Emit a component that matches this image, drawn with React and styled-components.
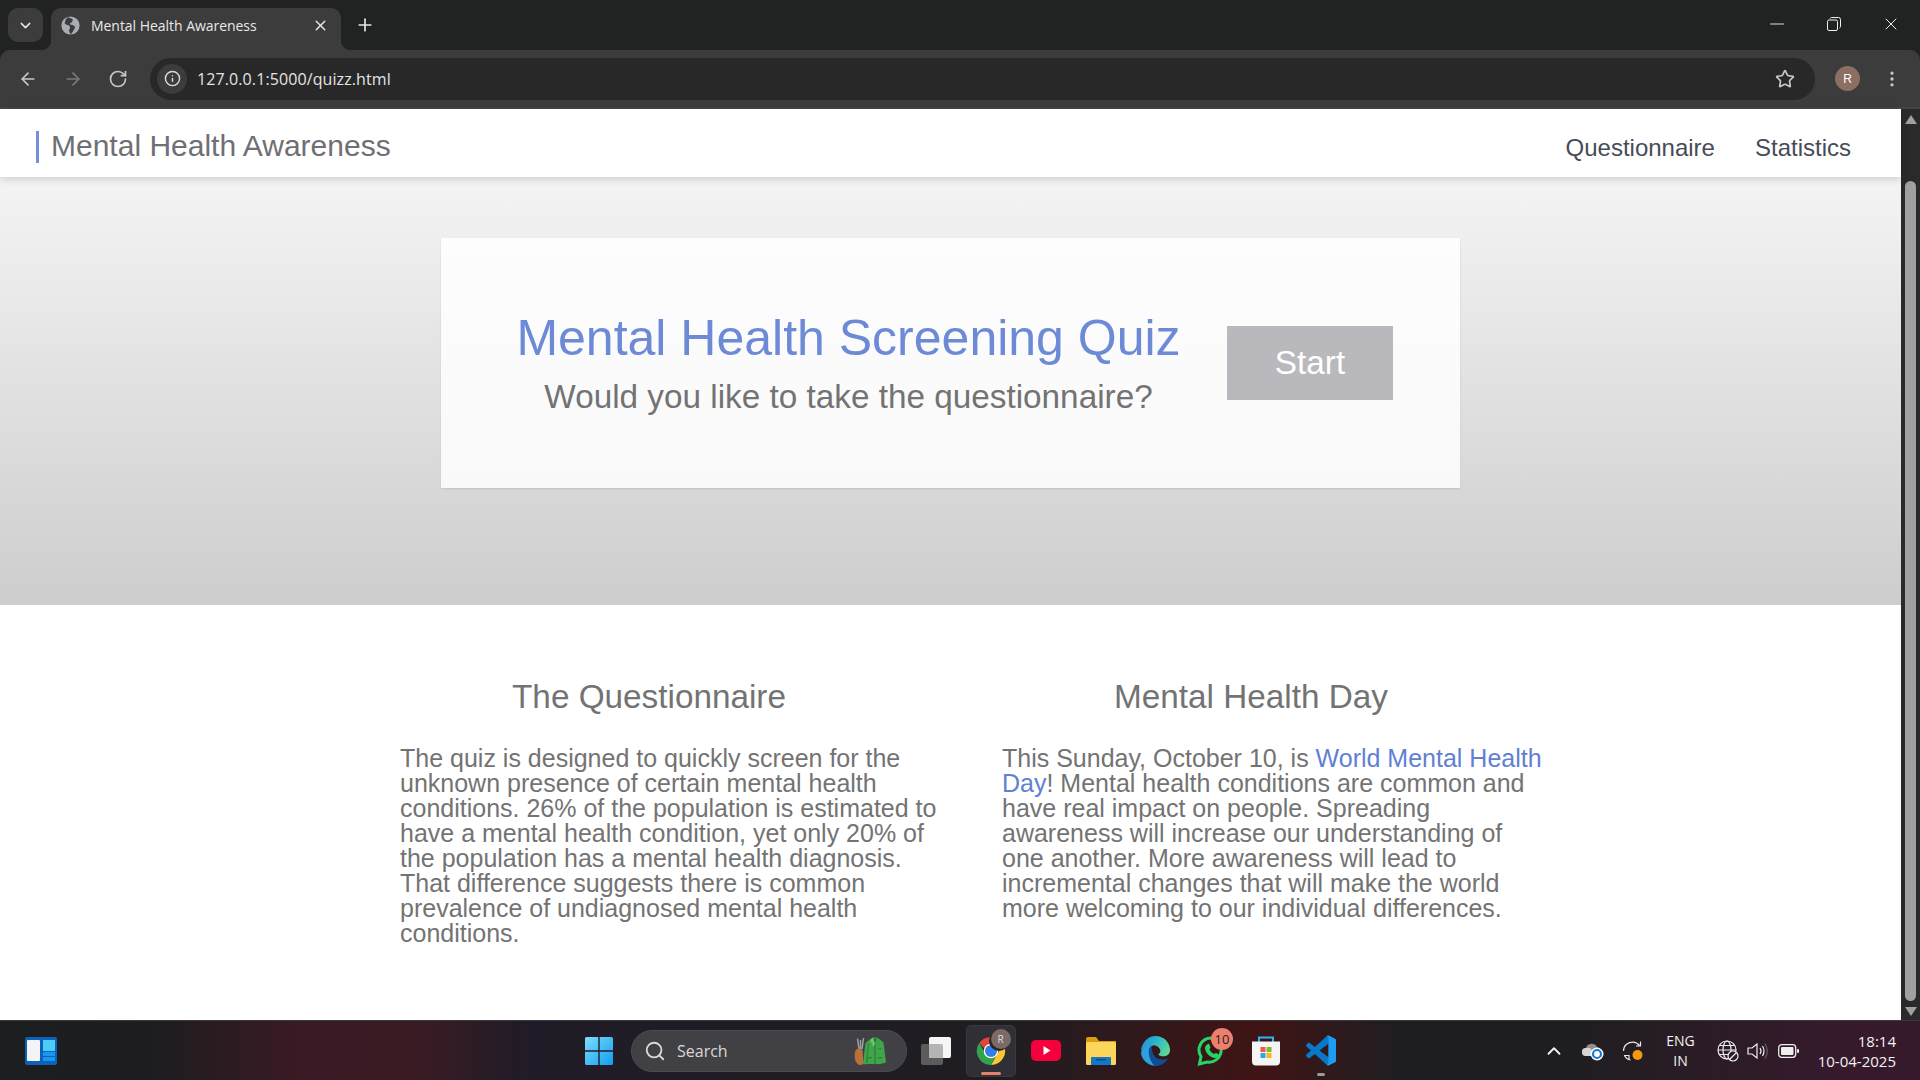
import React from 'react';
import styled, { createGlobalStyle } from 'styled-components';
import { LuArrowLeft, LuArrowRight, LuRotateCw, LuInfo, LuStar, LuEllipsisVertical, LuX, LuPlus, LuChevronDown, LuChevronUp, LuSearch, LuMinus } from 'react-icons/lu';

const GlobalStyle = createGlobalStyle`
  html, body { margin: 0; padding: 0; height: 100%; overflow: hidden; background: #212322; }
  * { box-sizing: border-box; }
`;

const Screen = styled.div`
  width: 1920px;
  height: 1080px;
  display: flex;
  flex-direction: column;
  background: #212322;
  font-family: 'Liberation Sans', Arial, sans-serif;
`;

/* browser chrome */
const TabStrip = styled.div`
  height: 50px;
  background: #212322;
  display: flex;
  align-items: flex-end;
  padding-left: 8px;
  color: #e8e8e8;
`;

const TabMenu = styled.div`
  width: 35px;
  height: 34px;
  margin-bottom: 8px;
  border-radius: 10px;
  background: #3c3c3c;
  display: flex;
  align-items: center;
  justify-content: center;
  font-size: 17px;
`;

const Tab = styled.div`
  position: relative;
  width: 290px;
  height: 42px;
  margin-left: 8px;
  padding: 0 12px 8px 10px;
  background: #3c3c3c;
  border-radius: 10px 10px 0 0;
  display: flex;
  align-items: center;
  gap: 11px;
  font-family: 'Open Sans', 'Noto Sans', sans-serif;
  font-size: 14px;
  letter-spacing: -0.04px;
  &::before,
  &::after {
    content: '';
    position: absolute;
    bottom: 0;
    width: 10px;
    height: 10px;
  }
  &::before {
    left: -10px;
    background: radial-gradient(circle at 0 0, transparent 10px, #3c3c3c 10.5px);
  }
  &::after {
    right: -10px;
    background: radial-gradient(circle at 100% 0, transparent 10px, #3c3c3c 10.5px);
  }
`;

const TabTitle = styled.span`
  flex: 1;
  white-space: nowrap;
`;

const NewTab = styled.div`
  width: 22px;
  height: 42px;
  margin-left: 13px;
  padding-bottom: 8px;
  display: flex;
  align-items: center;
  justify-content: center;
  font-size: 20px;
`;

const WindowControls = styled.div`
  margin-left: auto;
  height: 50px;
  display: flex;
  align-items: center;
  padding: 0 1px 2px 0;
  color: #f0f0f0;
`;

const ControlCell = styled.div`
  width: 57px;
  display: flex;
  justify-content: center;
`;

const Toolbar = styled.div`
  height: 59px;
  background: #3c3c3c;
  border-radius: 10px 10px 0 0;
  border-bottom: 2px solid #454545;
  display: flex;
  align-items: center;
  padding-left: 17px;
  color: #c7c7c7;
`;

const NavIcon = styled.div`
  width: 22px;
  margin-right: ${(props) => props.gap || 23}px;
  display: flex;
  justify-content: center;
  font-size: 20px;
  color: ${(props) => (props.dim ? '#7a7a7a' : '#c7c7c7')};
`;

const Omnibox = styled.div`
  width: 1665px;
  height: 42px;
  border-radius: 21px;
  background: #282828;
  display: flex;
  align-items: center;
  padding: 0 20px 0 7px;
`;

const InfoBadge = styled.div`
  width: 30px;
  height: 30px;
  border-radius: 50%;
  background: #3c3c3c;
  display: flex;
  align-items: center;
  justify-content: center;
  font-size: 17px;
  color: #dcdcdc;
`;

const Url = styled.span`
  flex: 1;
  margin-left: 10px;
  font-family: 'Open Sans', 'Noto Sans', sans-serif;
  font-size: 16px;
  letter-spacing: 0.1px;
  color: #e4e4e4;
`;

const Avatar = styled.div`
  width: 25px;
  height: 25px;
  margin-left: 20px;
  border-radius: 50%;
  background: #8d6e63;
  color: #fff;
  display: flex;
  align-items: center;
  justify-content: center;
  font-size: 12px;
`;

const MoreIcon = styled.div`
  margin-left: 22px;
  font-size: 20px;
  display: flex;
  color: #c7c7c7;
`;

/* page */
const Viewport = styled.div`
  flex: 1;
  min-height: 0;
  display: flex;
`;

const Page = styled.div`
  flex: 1;
  background: #fff;
  display: flex;
  flex-direction: column;
`;

const NavBar = styled.nav`
  height: 68px;
  background: #fff;
  display: flex;
  align-items: center;
  justify-content: space-between;
  padding: 0 50px 0 36px;
  box-shadow: 0 2px 8px rgba(0, 0, 0, 0.18);
  position: relative;
`;

const Brand = styled.div`
  height: 32px;
  margin-top: 7px;
  padding-left: 12px;
  border-left: 3px solid #7390d8;
  font-size: 30px;
  line-height: 29px;
  color: #6f6f75;
`;

const NavLinks = styled.div`
  display: flex;
  gap: 40px;
  margin-top: 10px;
`;

const NavLink = styled.a`
  font-size: 24px;
  color: #474b58;
`;

const Hero = styled.section`
  height: 428px;
  background: linear-gradient(#f4f4f4, #cdcdcd);
  padding-top: 61px;
  display: flex;
  justify-content: center;
`;

const HeroCard = styled.div`
  width: 1019px;
  height: 250px;
  background: rgba(255, 255, 255, 0.85);
  box-shadow: 0 1px 2px rgba(0, 0, 0, 0.1);
  display: flex;
  align-items: center;
  padding-left: 74px;
`;

const HeroText = styled.div`
  width: 667px;
  text-align: center;
`;

const HeroTitle = styled.h1`
  margin: 0;
  font-size: 50px;
  font-weight: 400;
  line-height: 56px;
  color: #6c8ad6;
`;

const HeroSub = styled.p`
  margin: 11px 0 0;
  font-size: 33.3px;
  line-height: 40px;
  color: #737373;
`;

const StartButton = styled.button`
  width: 166px;
  height: 74px;
  margin-left: 45px;
  border: none;
  background: #b9b9bd;
  color: #fff;
  font-family: inherit;
  font-size: 33.3px;
`;

const Info = styled.section`
  flex: 1;
  display: flex;
  padding: 72px 0 0 400px;
  gap: 62px;
`;

const InfoColumn = styled.div`
  width: 540px;
`;

const InfoTitle = styled.h2`
  margin: 0 42px 29px 0;
  font-size: 33.3px;
  line-height: 40px;
  font-weight: 400;
  text-align: center;
  color: #737373;
`;

const InfoBody = styled.p`
  margin: 0;
  font-size: 25px;
  line-height: 25px;
  color: #737373;
`;

const InfoLink = styled.a`
  color: #6180d4;
`;

const Scrollbar = styled.div`
  width: 19px;
  background: #2a2a2a;
  display: flex;
  flex-direction: column;
  align-items: center;
  padding: 6px 0 4px;
`;

const ScrollArrow = styled.div`
  width: 0;
  height: 0;
  border-left: 6px solid transparent;
  border-right: 6px solid transparent;
  ${(props) => (props.down ? 'border-top: 9px solid #a0a0a0;' : 'border-bottom: 9px solid #a0a0a0;')}
`;

const ScrollThumb = styled.div`
  width: 11px;
  margin: 57px 0 6px;
  flex: 1;
  border-radius: 6px;
  background: #a0a0a0;
`;

/* taskbar */
const Taskbar = styled.div`
  height: 60px;
  border-top: 1px solid #3a3a3e;
  background: linear-gradient(90deg, #1c1e1f 0, #1d1d1f 150px, #3a1a24 300px, #3a1b24 420px, #211c27 520px, #1f1d22 1000px, #3f1414 1260px, #1f1e22 1400px, #1e1e20 1560px, #361a2c 1840px, #361a2c 1920px);
  display: flex;
  align-items: center;
  color: #f2f2f2;
`;

const WidgetSlot = styled.div`
  width: 584px;
  padding-left: 25px;
  display: flex;
`;

const Center = styled.div`
  display: flex;
  align-items: center;
`;

const SearchPill = styled.div`
  width: 276px;
  height: 42px;
  margin: 0 1px 0 17px;
  padding: 0 19px 0 12px;
  border-radius: 21px;
  background: #414145;
  border: 1px solid #4c4c50;
  display: flex;
  align-items: center;
  gap: 11px;
  font-family: 'Open Sans', 'Noto Sans', sans-serif;
  font-size: 16px;
  color: #d8d8d8;
`;

const SearchLabel = styled.span`
  flex: 1;
`;

const TaskIcon = styled.div`
  width: ${(props) => (props.active ? 50 : 55)}px;
  height: 52px;
  ${(props) => props.active && 'margin: 0 2.5px;'}
  display: flex;
  align-items: center;
  justify-content: center;
  position: relative;
  border-radius: 5px;
  ${(props) => props.active && 'background: #2f2f35; border: 1px solid #38383e;'}
`;

const Indicator = styled.span`
  position: absolute;
  bottom: 1px;
  left: 50%;
  transform: translateX(-50%);
  height: 3px;
  width: ${(props) => (props.wide ? 20 : 8)}px;
  border-radius: 2px;
  background: ${(props) => (props.wide ? '#e8806e' : '#9a9a9a')};
`;

const Badge = styled.span`
  position: absolute;
  top: 3px;
  right: 5px;
  width: 22px;
  height: 22px;
  border-radius: 50%;
  background: #ee7f6c;
  color: #222;
  font-family: 'Open Sans', 'Noto Sans', sans-serif;
  font-size: 13px;
  display: flex;
  align-items: center;
  justify-content: center;
`;

const AvatarBadge = styled(Badge)`
  top: 3px;
  right: 4px;
  width: 20px;
  height: 20px;
  background: #7b6a66;
  color: #ddd;
  font-size: 10px;
  box-shadow: -2px 2px 0 #26262a;
`;

const Tray = styled.div`
  margin-left: auto;
  display: flex;
  align-items: center;
  padding-right: 24px;
`;

const TrayIcon = styled.div`
  margin-right: ${(props) => props.gap}px;
  display: flex;
  align-items: center;
  font-size: ${(props) => props.size || 20}px;
`;

const TrayText = styled.div`
  font-family: 'Open Sans', 'Noto Sans', sans-serif;
  font-size: ${(props) => props.size || 14}px;
  line-height: 20px;
  text-align: ${(props) => props.align || 'center'};
`;

const Globe = ({ size = 19 }) => (
  <svg width={size} height={size} viewBox="0 0 24 24" fill="#a8adb4">
    <circle cx="12" cy="12" r="11.500" />
    <path fill="#3c3c3c" d="M9 1.500 6 4.500 4.500 9l3 2.500 3 .5 1 3-1.500 3 1.500 4.500 2-.5 3-5 1.500-3-3-2.500-3-.5-.5-2 2.500-1.500 1-3-2-1.500z" />
  </svg>
);

const WindowsLogo = () => (
  <svg width="30" height="30" viewBox="0 0 30 30">
    <defs>
      <linearGradient id="winA" x1="0" y1="0" x2="1" y2="1">
        <stop offset="0" stopColor="#7fdcfb" />
        <stop offset="1" stopColor="#0f9ff0" />
      </linearGradient>
    </defs>
    <path fill="url(#winA)" d="M1 2.500Q1 1 2.500 1H14.300V14.300H1zM15.700 1H27.500Q29 1 29 2.500V14.300H15.700zM1 15.700H14.300V29H2.500Q1 29 1 27.500zM15.700 15.700H29V27.500Q29 29 27.500 29H15.700z" />
  </svg>
);

const WidgetIcon = () => (
  <svg width="32" height="28" viewBox="0 0 32 28">
    <rect width="32" height="28" rx="2" fill="#0b62b8" />
    <rect x="2" y="3" width="13" height="21" rx="1" fill="#f2f4f6" />
    <rect x="18" y="3" width="12" height="11" fill="#4fc8fa" />
    <rect x="18" y="15" width="12" height="4" fill="#1798ee" />
    <rect x="18" y="20" width="12" height="4" fill="#1798ee" />
  </svg>
);

const Golf = () => (
  <svg width="34" height="30" viewBox="0 0 34 30">
    <path stroke="#9aa0a0" strokeWidth="1.500" fill="none" d="M6 13 4.500 2.500M9 13l1.500-11M7.500 13V4" />
    <path fill="#b8713a" d="M2.500 14q4-3 7 0l1 14q-3 1.500-5.500.5Q0 24 2.500 14z" />
    <path fill="#3fa44a" d="M17 3.500 20 1.500h4l3 2 3.500 3 2.500 20-3.500 1-1-1v1.500H14V28l-1 .5-3-1 2.500-20.500z" />
    <path fill="#24762f" d="M20 1.500l2 6 2-6-2 1.500zM21.500 8h1v21h-1z" />
    <path fill="#2c8439" d="M15 21h4v1.500h-4zM25 21h4v1.500h-4zM25.500 12h3v1.200h-3zM16 7l-1.500 20h-1.500L15 7z" />
    <path fill="#6cc46a" d="M17 4l3.500 7L22 8 20 1.500z" />
  </svg>
);

const TaskView = () => (
  <svg width="30" height="28" viewBox="0 0 30 28">
    <rect y="7" width="22" height="21" rx="2" fill="#5c5c5c" />
    <rect x="8" width="22" height="21" rx="2" fill="#f6f6f6" />
    <path fill="#b5b5b5" d="M8 7h12q2 0 2 2v12H10q-2 0-2-2z" />
  </svg>
);

const Chrome = () => (
  <svg width="30" height="30" viewBox="0 0 32 32">
    <path fill="#e2453a" d="M16 1a15 15 0 0 1 13 7.500H16a7.500 7.500 0 0 0-7 4.800L3.500 7.500A15 15 0 0 1 16 1z" />
    <path fill="#fbc62f" d="M29 8.500A15 15 0 0 1 16 31l6.500-11.500A7.500 7.500 0 0 0 22 8.500z" />
    <path fill="#2fa34f" d="M3.500 7.500 10 19a7.500 7.500 0 0 0 12.500.5L16 31A15 15 0 0 1 3.500 7.500z" />
    <circle cx="16" cy="16" r="6" fill="#2f7ff0" />
    <circle cx="16" cy="16" r="7" fill="none" stroke="#fff" strokeWidth="1.500" />
  </svg>
);

const YouTube = () => (
  <svg width="30" height="21" viewBox="0 0 30 21">
    <rect width="30" height="21" rx="5" fill="#f5003c" />
    <path fill="#fff" d="M12.500 6l7 4.500-7 4.500z" />
  </svg>
);

const Folder = () => (
  <svg width="30" height="28" viewBox="0 0 30 28">
    <path fill="#d99e10" d="M0 2q0-2 2-2h8l3 4h17v6H0z" />
    <rect y="5" width="30" height="23" rx="1.500" fill="#fbd65a" />
    <path fill="#1576c4" d="M5 21q0-1 1-1h18q1 0 1 1v7H5z" />
    <rect x="10" y="22" width="10" height="1.500" fill="#0d4f8c" />
  </svg>
);

const Edge = () => (
  <svg width="31" height="32" viewBox="0 0 32 32">
    <defs>
      <linearGradient id="edgeTop" x1="0" y1="0.300" x2="1" y2="0.700">
        <stop offset="0" stopColor="#1c8fdc" />
        <stop offset="0.550" stopColor="#34bfc0" />
        <stop offset="1" stopColor="#62d98a" />
      </linearGradient>
    </defs>
    <path fill="#2f9fe0" d="M13.500 31C7 29.500 2 25 1 18c1-5 6-8.500 13-8-3.500 1.500-5 5-4.500 9 .5 5 2.500 9 6 12.500z" />
    <path fill="#0d4f96" d="M12 10.500c-3 2-3.500 6-2.500 9.500 1.500 6 4 9.500 6.500 11.500 5 0 10-2.500 13-8-5 2.500-11 1.500-14-2-2.500-3-3-8-3-11z" />
    <path fill="url(#edgeTop)" d="M1 16C2 7 8 .5 16 .5c9 0 15 7 15 14.500 0 4.500-3.500 6.500-7 6.500-2.500 0-4.500-1-5-2 2-1.500 2.500-3.500 1.500-5.500-2-4-7-5-11.500-3-3.500 1.500-6.500 3-8 5z" />
  </svg>
);

const WhatsApp = () => (
  <svg width="28" height="32" viewBox="0 0 28 32">
    <path fill="none" stroke="#25d366" strokeWidth="3" d="M14 3a12 12 0 0 0-10 18.500L2.500 29l7.500-2A12 12 0 1 0 14 3z" />
    <path fill="#25d366" d="M10 9.500c1-1 2-1 2.500 0l1 3-1 2c1 2 2.500 3.500 4.500 4.500l2-1 3 1.500c0 2-2 3.500-4 3.500-4.500 0-10-5.500-10-10 0-1 1-3 2.500-3.500z" />
  </svg>
);

const Store = () => (
  <svg width="30" height="30" viewBox="0 0 30 30">
    <path fill="none" stroke="#29b6f6" strokeWidth="2" d="M8 6V1.500h14V6" />
    <path fill="#f4f4f4" d="M1 5.500h28v20q0 4-4 4H5q-4 0-4-4z" />
    <rect x="9.500" y="11" width="5" height="5" fill="#ef5b3b" />
    <rect x="15.500" y="11" width="5" height="5" fill="#79bb2e" />
    <rect x="9.500" y="17" width="5" height="5" fill="#2aa6ee" />
    <rect x="15.500" y="17" width="5" height="5" fill="#fdb813" />
  </svg>
);

const VSCode = () => (
  <svg width="30" height="31" viewBox="0 0 100 100">
    <path fill="#0a78c8" fillRule="evenodd" d="M70.9 99.3c1.600.6 3.400.6 5-.2l20.600-9.900c2.100-1 3.500-3.200 3.500-5.600V16.400c0-2.400-1.400-4.600-3.500-5.600L75.900.9c-2.100-1-4.600-.8-6.400.6-.3.2-.5.400-.7.600L29.400 38 12.200 25c-1.600-1.200-3.800-1.100-5.300.2l-5.500 5c-1.800 1.700-1.800 4.500 0 6.200L16.200 50 1.400 63.600c-1.800 1.700-1.800 4.500 0 6.200l5.500 5c1.500 1.300 3.700 1.400 5.300.2L29.400 62l39.400 35.900c.6.600 1.300 1.100 2.100 1.400zM75 27.300 45.100 50 75 72.700z" />
    <path fill="#1f9cf0" d="M75 .4l21.500 10.400Q100 13 100 16.400v67.200q0 3.400-3.500 5.600L75.900 99.100q-3.400 1.400-5.900-.6 5-2.500 5-7.500V9q0-5-5-7.500 2.500-2 5-1.100z" />
  </svg>
);

const CloudSync = () => (
  <svg width="22" height="20" viewBox="0 0 22 20">
    <path fill="#8f8f8f" d="M4 15a4 4 0 0 1 0-8 6 6 0 0 1 11-1 4 4 0 0 1 3 5v4z" />
    <path fill="#d6d6d6" d="M4 15a4 4 0 0 1 0-8q4-1 6 2 2 1 1 6z" />
    <circle cx="15" cy="13" r="6.500" fill="#fff" />
    <circle cx="15" cy="13" r="4" fill="none" stroke="#1b78d0" strokeWidth="2.200" />
  </svg>
);

const SyncDot = () => (
  <svg width="22" height="22" viewBox="0 0 22 22" fill="none">
    <path stroke="#e8e8e8" strokeWidth="1.200" d="M1.500 11A9 9 0 0 1 17.500 5.500M18.500 1.500v4.500h-4.500M2 15.500h5v4.500M2.500 15.500a8 8 0 0 0 6 4.500" />
    <circle cx="15.500" cy="15" r="5" fill="#f59a0f" />
  </svg>
);

const GlobeOff = () => (
  <svg width="22" height="22" viewBox="0 0 22 22" fill="none" stroke="#eee" strokeWidth="1.200">
    <circle cx="10" cy="10" r="9" />
    <ellipse cx="10" cy="10" rx="4" ry="9" />
    <path d="M1 10h18M2.500 5.500h15M2.500 14.500h9" />
    <circle cx="16" cy="16" r="5" fill="#2a1c26" />
    <path d="M12.500 19.500l7-7" />
  </svg>
);

const Speaker = () => (
  <svg width="22" height="20" viewBox="0 0 22 20" fill="none" stroke="#eee" strokeWidth="1.200">
    <path d="M1 7h4l5-4v14l-5-4H1z" />
    <path d="M13 7q2 3 0 6M15.500 5q3 5 0 10" />
    <path d="M18 2.500q4.500 7.500 0 15" opacity="0.3" />
  </svg>
);

const Battery = () => (
  <svg width="21" height="14" viewBox="0 0 21 14" fill="none">
    <rect x="0.700" y="0.700" width="17" height="12.600" rx="3" stroke="#eee" strokeWidth="1.300" />
    <rect x="3" y="3" width="12.500" height="8" rx="1" fill="#eee" />
    <rect x="19" y="5" width="2" height="4" rx="1" fill="#eee" />
  </svg>
);

const RestoreIcon = () => (
  <svg width="14" height="14" viewBox="0 0 14 14" fill="none" stroke="#f0f0f0" strokeWidth="1">
    <rect x="0.500" y="3" width="10" height="10.500" rx="1.500" />
    <path d="M3 1.500q.5-1 1.500-1h7q2 0 2 2v7q0 1-1 1.500" />
  </svg>
);

const questionnaireText =
  'The quiz is designed to quickly screen for the unknown presence of certain mental health conditions. 26% of the population is estimated to have a mental health condition, yet only 20% of the population has a mental health diagnosis. That difference suggests there is common prevalence of undiagnosed mental health conditions.';

export default function App() {
  return (
    <Screen>
      <GlobalStyle />
      <TabStrip>
        <TabMenu><LuChevronDown /></TabMenu>
        <Tab>
          <Globe />
          <TabTitle>Mental Health Awareness</TabTitle>
          <LuX size={17} />
        </Tab>
        <NewTab><LuPlus /></NewTab>
        <WindowControls>
          <ControlCell><LuMinus size={22} strokeWidth={1} /></ControlCell>
          <ControlCell><RestoreIcon /></ControlCell>
          <ControlCell><LuX size={20} strokeWidth={1.2} /></ControlCell>
        </WindowControls>
      </TabStrip>
      <Toolbar>
        <NavIcon><LuArrowLeft /></NavIcon>
        <NavIcon dim><LuArrowRight /></NavIcon>
        <NavIcon gap={21}><LuRotateCw /></NavIcon>
        <Omnibox>
          <InfoBadge><LuInfo /></InfoBadge>
          <Url>127.0.0.1:5000/quizz.html</Url>
          <LuStar size={20} />
        </Omnibox>
        <Avatar>R</Avatar>
        <MoreIcon><LuEllipsisVertical /></MoreIcon>
      </Toolbar>
      <Viewport>
        <Page>
          <NavBar>
            <Brand>Mental Health Awareness</Brand>
            <NavLinks>
              <NavLink>Questionnaire</NavLink>
              <NavLink>Statistics</NavLink>
            </NavLinks>
          </NavBar>
          <Hero>
            <HeroCard>
              <HeroText>
                <HeroTitle>Mental Health Screening Quiz</HeroTitle>
                <HeroSub>Would you like to take the questionnaire?</HeroSub>
              </HeroText>
              <StartButton>Start</StartButton>
            </HeroCard>
          </Hero>
          <Info>
            <InfoColumn>
              <InfoTitle>The Questionnaire</InfoTitle>
              <InfoBody>{questionnaireText}</InfoBody>
            </InfoColumn>
            <InfoColumn>
              <InfoTitle>Mental Health Day</InfoTitle>
              <InfoBody>
                This Sunday, October 10, is <InfoLink>World Mental Health Day</InfoLink>! Mental health conditions are common and have real impact on people. Spreading awareness will increase our understanding of one another. More awareness will lead to incremental changes that will make the world more welcoming to our individual differences.
              </InfoBody>
            </InfoColumn>
          </Info>
        </Page>
        <Scrollbar>
          <ScrollArrow />
          <ScrollThumb />
          <ScrollArrow down />
        </Scrollbar>
      </Viewport>
      <Taskbar>
        <WidgetSlot><WidgetIcon /></WidgetSlot>
        <Center>
          <WindowsLogo />
          <SearchPill>
            <LuSearch size={22} />
            <SearchLabel>Search</SearchLabel>
            <Golf />
          </SearchPill>
          <TaskIcon><TaskView /></TaskIcon>
          <TaskIcon active><Chrome /><AvatarBadge>R</AvatarBadge><Indicator wide /></TaskIcon>
          <TaskIcon><YouTube /></TaskIcon>
          <TaskIcon><Folder /></TaskIcon>
          <TaskIcon><Edge /></TaskIcon>
          <TaskIcon><WhatsApp /><Badge>10</Badge></TaskIcon>
          <TaskIcon><Store /></TaskIcon>
          <TaskIcon><VSCode /><Indicator /></TaskIcon>
        </Center>
        <Tray>
          <TrayIcon gap={17} size={22}><LuChevronUp /></TrayIcon>
          <TrayIcon gap={18}><CloudSync /></TrayIcon>
          <TrayIcon gap={22}><SyncDot /></TrayIcon>
          <TrayIcon gap={22}><TrayText>ENG<br />IN</TrayText></TrayIcon>
          <TrayIcon gap={8}><GlobeOff /></TrayIcon>
          <TrayIcon gap={9}><Speaker /></TrayIcon>
          <TrayIcon gap={19}><Battery /></TrayIcon>
          <TrayText align="right" size={15}>18:14<br />10-04-2025</TrayText>
        </Tray>
      </Taskbar>
    </Screen>
  );
}
